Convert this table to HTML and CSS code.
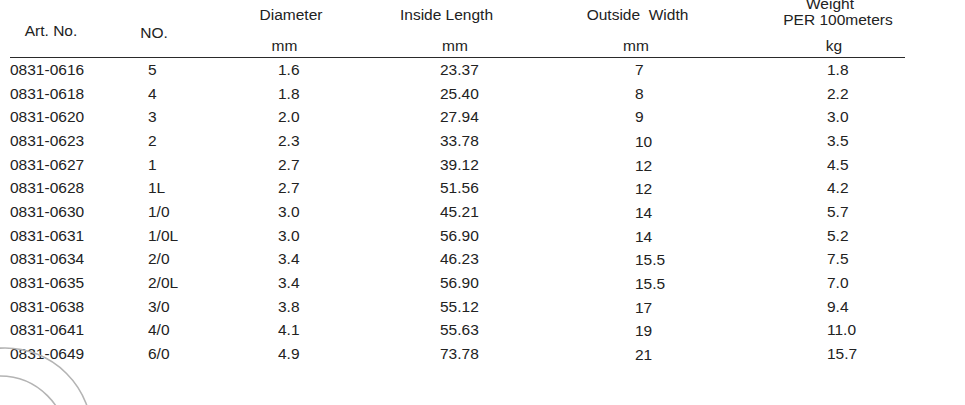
FILE: index.html
```html
<!DOCTYPE html>
<html lang="en">
<head>
<meta charset="utf-8">
<title>Art. No. table</title>
<link rel="stylesheet" href="styles.css">
</head>
<body>
<div class="sheet">
  <div class="head">
    <div class="titles">
      <div class="t t-art">Art. No.</div>
      <div class="t t-no">NO.</div>
      <div class="t t-mid">Diameter</div>
      <div class="t t-mid">Inside Length</div>
      <div class="t t-mid t-pre">Outside  Width</div>
      <div class="t t-weight"><span class="w1">Weight</span><span>PER 100meters</span></div>
    </div>
    <div class="units">
      <div></div>
      <div class="u">mm</div>
      <div class="u">mm</div>
      <div class="u">mm</div>
      <div class="u">kg</div>
    </div>
  </div>
  <div class="rule"></div>
  <div class="rows">
    <div>0831-0616</div><div>5</div><div>1.6</div><div>23.37</div><div>7</div><div>1.8</div>
    <div>0831-0618</div><div>4</div><div>1.8</div><div>25.40</div><div>8</div><div>2.2</div>
    <div>0831-0620</div><div>3</div><div>2.0</div><div>27.94</div><div>9</div><div>3.0</div>
    <div>0831-0623</div><div>2</div><div>2.3</div><div>33.78</div><div class="lo">10</div><div>3.5</div>
    <div>0831-0627</div><div>1</div><div>2.7</div><div>39.12</div><div class="lo">12</div><div>4.5</div>
    <div>0831-0628</div><div>1L</div><div>2.7</div><div>51.56</div><div class="lo">12</div><div>4.2</div>
    <div>0831-0630</div><div>1/0</div><div>3.0</div><div>45.21</div><div class="lo">14</div><div>5.7</div>
    <div>0831-0631</div><div>1/0L</div><div>3.0</div><div>56.90</div><div class="lo">14</div><div>5.2</div>
    <div>0831-0634</div><div>2/0</div><div>3.4</div><div>46.23</div><div class="lo">15.5</div><div>7.5</div>
    <div>0831-0635</div><div>2/0L</div><div>3.4</div><div>56.90</div><div class="lo">15.5</div><div>7.0</div>
    <div>0831-0638</div><div>3/0</div><div>3.8</div><div>55.12</div><div class="lo">17</div><div>9.4</div>
    <div>0831-0641</div><div>4/0</div><div>4.1</div><div>55.63</div><div class="lo">19</div><div>11.0</div>
    <div>0831-0649</div><div>6/0</div><div>4.9</div><div>73.78</div><div class="lo">21</div><div>15.7</div>
  </div>
  <svg class="deco" width="120" height="70" viewBox="0 335 120 70" aria-hidden="true">
    <circle cx="5" cy="435" r="87" fill="none" stroke="#b4b4b4" stroke-width="1.6"/>
    <circle cx="0" cy="443" r="67" fill="none" stroke="#b4b4b4" stroke-width="1.6"/>
  </svg>
</div>
</body>
</html>
```
FILE: styles.css
```css
html, body {
  margin: 0;
  padding: 0;
  background: #fff;
}
body {
  font-family: "Liberation Sans", Arial, sans-serif;
  font-size: 15.5px;
  color: #222;
  width: 965px;
  height: 405px;
  overflow: hidden;
}
.sheet {
  position: relative;
  width: 965px;
  height: 405px;
}
.head {
  height: 57px;
  overflow: visible;
}
.titles {
  margin-left: 10px;
  height: 38px;
  display: grid;
  grid-template-columns: 82px 124px 150px 161px 221px 180px;
  grid-template-rows: 38px;
  align-items: start;
}
.t {
  text-align: center;
  line-height: 16px;
  white-space: nowrap;
}
.t-art { padding-top: 23px; }
.t-no { padding-top: 25px; }
.t-mid { padding-top: 7px; }
.t-pre { white-space: pre; }
.t-weight {
  display: flex;
  flex-direction: column;
  align-items: center;
  line-height: 15.7px;
  margin-top: -4px;
}
.w1 { padding-right: 16px; }
.units {
  margin-left: 10px;
  height: 19px;
  display: grid;
  grid-template-columns: 204px 141px 200px 162px 234px;
}
.u {
  text-align: center;
  line-height: 16px;
}
.rule {
  margin-left: 10px;
  width: 895px;
  height: 1px;
  background: #2a2a2a;
}
.rows {
  margin-left: 10px;
  display: grid;
  grid-template-columns: 138px 130px 162px 195px 192px 1fr;
  grid-auto-rows: 23.67px;
  line-height: 23.67px;
  white-space: nowrap;
}
.rows .lo { padding-top: 1px; }
.deco {
  position: absolute;
  left: 0;
  top: 335px;
}
```
